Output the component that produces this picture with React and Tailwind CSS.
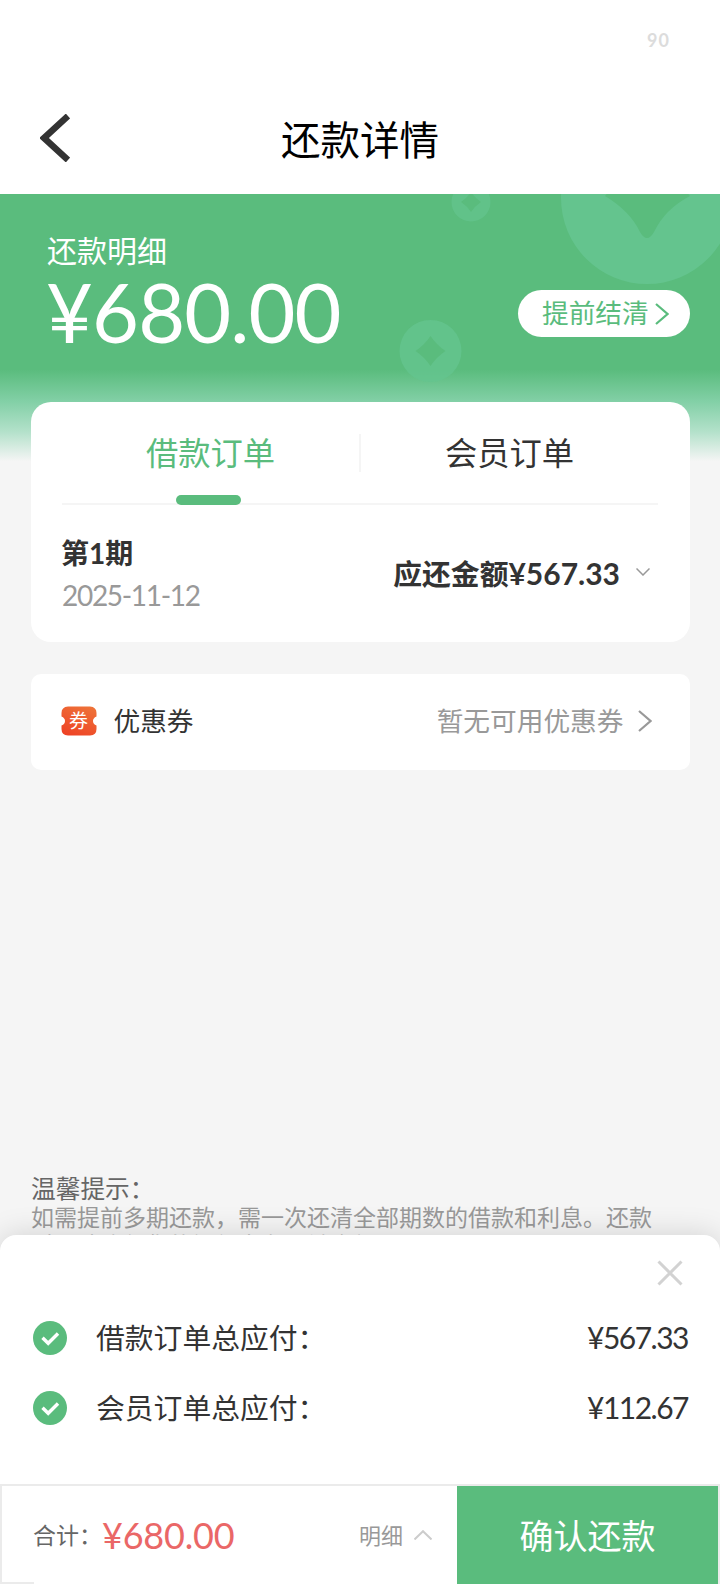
import React, { useState } from 'react';

const orders = [
  { label: '借款订单总应付：', amount: '¥567.33' },
  { label: '会员订单总应付：', amount: '¥112.67' },
];

// 背景装饰：铜钱图案
function Coins() {
  return (
    <svg className="absolute left-0 top-0 w-[720px] h-[270px]" viewBox="0 0 720 270" fill="none">
      <g fill="#64c48e" fillRule="evenodd">
        <path opacity="0.7" d="M451.500 8a19.500 19.500 0 1 0 39 0a19.500 19.500 0 1 0 -39 0ZM471 -2q4 6 10 10q-6 4 -10 10q-4 -6 -10 -10q6 -4 10 -10Z" />
        <path d="M561 4a86 86 0 1 0 172 0a86 86 0 1 0 -172 0ZM647 -50L605 2Q630 17 640 38Q647 50 654 38Q665 15 690 2Z" />
        <path opacity="0.8" d="M399.500 157a31 31 0 1 0 62 0a31 31 0 1 0 -62 0ZM430.500 142q6 9 15 15q-9 6 -15 15q-6 -9 -15 -15q9 -6 15 -15Z" />
      </g>
    </svg>
  );
}

function Chevron({ className, d, width, box }) {
  return (
    <svg className={className} viewBox={box} fill="none" stroke="currentColor" strokeWidth={width}>
      <path d={d} />
    </svg>
  );
}

// 优惠券图标
function CouponIcon() {
  return (
    <div className="relative w-9 h-[30px] flex items-center justify-center">
      <svg className="absolute inset-0 w-9 h-[30px]" viewBox="0 0 36 30">
        <defs>
          <linearGradient id="coupon" x1="0.8" y1="0" x2="0.3" y2="1">
            <stop offset="0" stopColor="#ee7238" />
            <stop offset="1" stopColor="#ee4426" />
          </linearGradient>
        </defs>
        <path fill="url(#coupon)" d="M7 0.500H29Q35.500 1 35.500 7V10.500Q32 12 32 15Q32 18 35.500 19.500V23Q35.500 29 29 29.500H7Q0.500 29 0.500 23V19.500Q4 18 4 15Q4 12 0.500 10.500V7Q0.500 1 7 0.500Z" />
      </svg>
      <span className="relative text-white text-[19px] leading-none">券</span>
    </div>
  );
}

function CheckIcon() {
  return (
    <svg className="w-[34px] h-[34px]" viewBox="0 0 34 34" fill="none">
      <circle cx="17" cy="17" r="17" fill="#5abc7d" />
      <path d="M9.500 16.800L15.200 22.300L25 12.500" stroke="#fff" strokeWidth="3.400" />
    </svg>
  );
}

export default function RepayDetail() {
  const [tab, setTab] = useState('loan');
  const tabClass = (name) => `flex-1 text-center ${tab === name ? 'text-[#5abc7d]' : 'text-[#333333]'}`;

  return (
    <div className="relative w-[720px] h-[1584px] overflow-hidden bg-[#f5f5f5] text-[#333333] font-['Lato','Noto_Sans_CJK_SC',sans-serif]">
      {/* 状态栏 */}
      <div className="h-20 bg-white flex justify-end items-center pr-[50px]">
        <span className="text-[18px] font-bold text-[#dcdcdc] tracking-[1px]">90</span>
      </div>

      {/* 标题栏 */}
      <div className="h-[114px] bg-white grid grid-cols-3 items-center">
        <Chevron className="w-[30px] h-12 ml-10 mt-0.5" box="0 0 30 48" d="M28 2L4 24L28 46" width="6.500" />
        <h1 className="pt-[5px] text-center text-[39.500px] leading-[60px] text-black">还款详情</h1>
      </div>

      {/* 头部金额 */}
      <div className="relative h-[270px] bg-[linear-gradient(to_bottom,#5abc7d_65%,#83d0a7_77%,#b3e1ca_88%,#f5f5f5_99%)]">
        <Coins />
        <div className="relative flex justify-between pl-[47px] pr-[30px] text-white">
          <div className="pt-[38px]">
            <div className="text-[30px] leading-9">还款明细</div>
            <div className="text-[81px] leading-[88px] tracking-[-0.900px] -ml-px">¥680.00</div>
          </div>
          <button className="mt-24 w-[172px] h-[47px] rounded-full bg-white text-[#5abc7d] flex items-center pl-6">
            <span className="text-[26.700px] leading-10 -mt-0.5">提前结清</span>
            <Chevron className="w-[14px] h-[22px] ml-1.5" box="0 0 14 22" d="M1 1L12.500 11L1 21" width="2.200" />
          </button>
        </div>
      </div>

      {/* 订单卡片 */}
      <div className="-mt-[62.500px] relative mx-[30.500px] h-[240.500px] rounded-[20px] bg-white px-[31.500px]">
        <div className="relative h-[103.500px] flex items-center border-b-2 border-[#f5f5f5] text-[32.300px] leading-[48px] pt-0.5">
          <button className={tabClass('loan')} onClick={() => setTab('loan')}>借款订单</button>
          <span className="w-0.5 h-[38px] bg-[#f5f5f5]" />
          <button className={tabClass('member')} onClick={() => setTab('member')}>会员订单</button>
          <span className="absolute -bottom-0.5 left-[113.500px] w-[65.500px] h-[10px] rounded-full bg-[#5abc7d]" />
        </div>
        <div className="flex justify-between items-center pt-[27px]">
          <div>
            <div className="text-[28px] leading-[42px] font-bold -ml-px">第1期</div>
            <div className="text-[28px] leading-[42px] tracking-[-1.300px] text-[#999999]">2025-11-12</div>
          </div>
          <div className="flex items-center pr-2">
            <span className="text-[28.800px] leading-[42px] font-bold -mt-0.5">应还金额<span className="text-[30px]">¥567.33</span></span>
            <Chevron className="w-[14px] h-2 ml-4 -mt-1 text-[#999999]" box="0 0 14 8" d="M0.500 0.500L7 7L13.500 0.500" width="1.500" />
          </div>
        </div>
      </div>

      {/* 优惠券 */}
      <div className="mt-8 mx-[30.500px] h-[96px] rounded-[10px] bg-white px-[30px] pb-[3px] flex items-center">
        <CouponIcon />
        <span className="ml-[17px] text-[26.700px] leading-10">优惠券</span>
        <span className="ml-auto text-[26.700px] leading-10 text-[#999999]">暂无可用优惠券</span>
        <Chevron className="w-[14px] h-[22px] ml-[14px] mr-2 text-[#999999]" box="0 0 14 22" d="M1 1L12.500 11L1 21" width="2.200" />
      </div>

      {/* 温馨提示 */}
      <div className="mt-[405px] px-[31px]">
        <div className="text-[24.700px] leading-7 text-[#666666]">温馨提示：</div>
        <p className="text-[23px] leading-[28px] text-[#999999]">如需提前多期还款，需一次还清全部期数的借款和利息。还款时，请确保您的银行卡有足够余额。</p>
      </div>

      {/* 底部弹层 */}
      <div className="absolute inset-x-0 bottom-0 h-[349.500px] rounded-t-[16px] bg-white shadow-[0_0_30px_rgba(0,0,0,0.15)] flex flex-col">
        <div className="h-[69px] flex justify-end pt-[25px] pr-[37px]">
          <Chevron className="w-[26px] h-[26px] text-[#d2d2d2]" box="0 0 26 26" d="M1.500 1.500L24.500 24.500M24.500 1.500L1.500 24.500" width="3" />
        </div>
        {orders.map((item) => (
          <div key={item.label} className="h-[69.500px] flex items-center pl-[33px] pr-8">
            <CheckIcon />
            <span className="ml-[29px] text-[28.800px] leading-10">{item.label}</span>
            <span className="ml-auto text-[30px] leading-10 tracking-[-1.500px] -mt-0.5">{item.amount}</span>
          </div>
        ))}

        <div className="mt-auto h-[100px] flex border-t-2 border-x-2 border-[#ebebeb]">
          <div className="relative flex-1 flex items-center pl-[31px]">
            <span className="absolute -left-0.5 bottom-0 w-[34px] h-0.5 bg-[#ebebeb]" />
            <span className="text-[23px] text-[#666666]">合计：</span>
            <span className="text-[36px] tracking-[-0.200px] text-[#ea6767]">¥680.00</span>
            <span className="ml-auto text-[22px] text-[#999999]">明细</span>
            <Chevron className="w-[18px] h-[10px] ml-[11px] mr-[25px] text-[#cccccc]" box="0 0 18 10" d="M0.500 9.500L9 1.200L17.500 9.500" width="2" />
          </div>
          <button className="w-[261px] bg-[#5abc7d] text-white text-[34px]">确认还款</button>
        </div>
      </div>
    </div>
  );
}
